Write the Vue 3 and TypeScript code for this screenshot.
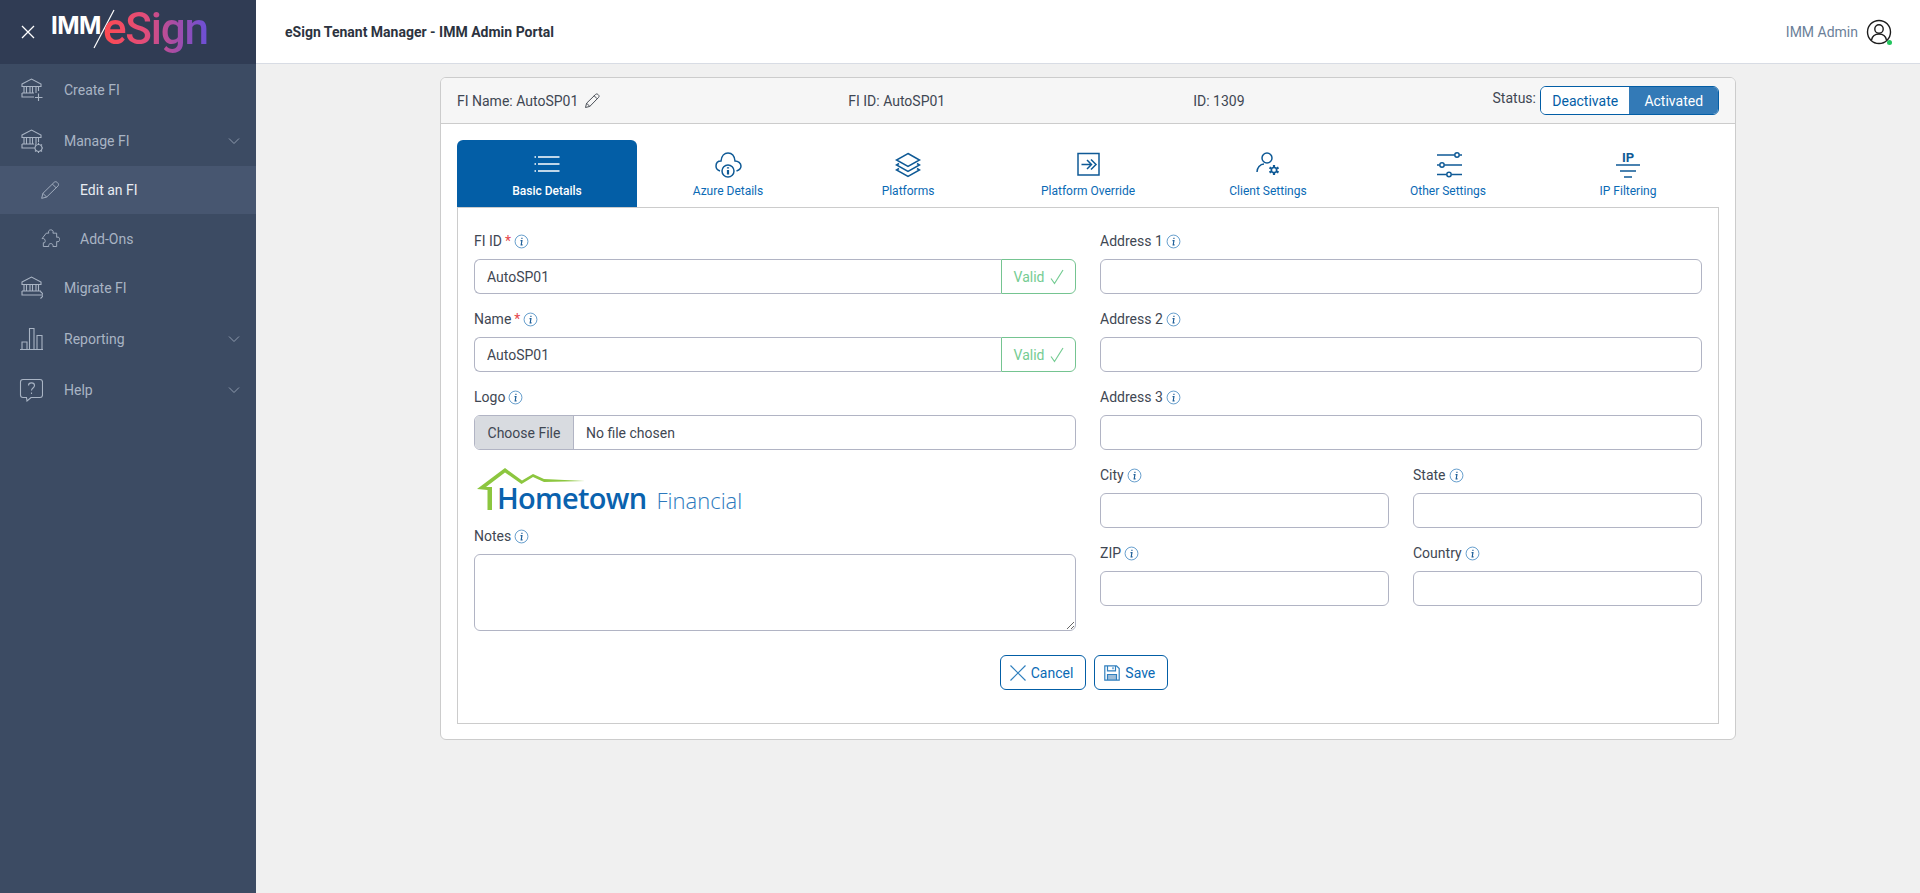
<template>
  <div class="app-shell">
    <aside class="sidebar">
      <div class="brand">
        <svg class="close-icon" viewBox="0 0 16 16" width="16" height="16">
          <path d="M2 2 L14 14 M14 2 L2 14" />
        </svg>
        <div class="logo">
          <span class="logo-imm">IMM</span>
          <svg class="logo-slash" viewBox="0 0 24 40" width="24" height="40"><path d="M22 1 L2 39" /></svg>
          <span class="logo-esign">eSign</span>
        </div>
      </div>
      <nav class="nav">
        <div
          v-for="item in navItems"
          :key="item.label"
          class="nav-item"
          :class="{ 'nav-sub': item.sub, 'nav-active': item.active }"
          :style="{ height: `${item.height}px` }"
        >
          <svg class="nav-icon" viewBox="0 0 24 24" :width="item.sub ? 20 : 24" :height="item.sub ? 20 : 24">
            <path :d="item.icon" />
          </svg>
          <span class="nav-label">{{ item.label }}</span>
          <svg v-if="item.chevron" class="nav-chevron" viewBox="0 0 12 8" width="12" height="8">
            <path d="M1 1.5 L6 6.5 L11 1.5" />
          </svg>
        </div>
      </nav>
    </aside>

    <div class="main">
      <header class="topbar">
        <div class="topbar-title">eSign Tenant Manager - IMM Admin Portal</div>
        <div class="user">
          <span>IMM Admin</span>
          <span class="avatar">
            <svg viewBox="0 0 26 26" width="26" height="26">
              <circle cx="13" cy="13" r="11.5" />
              <circle cx="13" cy="10" r="4.2" />
              <path d="M5.5 21 C6.5 16.5 9.5 15 13 15 C16.5 15 19.5 16.5 20.5 21" />
            </svg>
            <i class="avatar-dot"></i>
          </span>
        </div>
      </header>

      <section class="card">
        <div class="card-head">
          <div class="head-item">
            FI Name: AutoSP01
            <svg class="head-pencil" viewBox="0 0 16 16" width="16" height="16">
              <path d="M1.5 14.5 L2.6 10.2 L11.6 1.4 C12.3 .8 13.2 .8 13.9 1.4 L14.6 2.1 C15.2 2.8 15.2 3.7 14.6 4.4 L5.8 13.4 Z M10.2 2.8 L13.2 5.8 M2.6 10.2 L5.8 13.4" />
            </svg>
          </div>
          <div class="head-item">FI ID: AutoSP01</div>
          <div class="head-item">ID: 1309</div>
          <div class="status">
            <span>Status:</span>
            <div class="status-group">
              <button type="button" class="status-btn">Deactivate</button>
              <button type="button" class="status-btn status-on">Activated</button>
            </div>
          </div>
        </div>

        <div class="card-body">
          <div class="tabs">
            <div v-for="(tab, i) in tabs" :key="tab.label" class="tab" :class="{ 'tab-active': i === 0 }">
              <svg class="tab-icon" viewBox="0 0 28 28" width="28" height="28">
                <path :d="tab.icon" />
                <circle v-for="(c, j) in tab.circles" :key="j" :cx="c[0]" :cy="c[1]" :r="c[2]" />
                <path v-if="tab.extra" class="tab-icon-bold" :d="tab.extra" />
                <text v-if="tab.text" x="14" y="11" text-anchor="middle" class="tab-icon-text">{{ tab.text }}</text>
              </svg>
              <span>{{ tab.label }}</span>
            </div>
          </div>

          <div class="panel">
            <div class="form-grid">
              <div>
                <div class="field">
                  <label class="field-label">FI ID <em>*</em><svg class="info" viewBox="0 0 14 14" width="15" height="15"><circle cx="7" cy="7" r="6" /><path d="M7.4 3.6 V4.6 M6.1 6.2 H7.4 L6.7 10.2 H8" /></svg></label>
                  <div class="input-group">
                    <input class="input" type="text" value="AutoSP01" />
                    <span class="valid">Valid
                      <svg viewBox="0 0 16 16" width="16" height="16"><path d="M2 9.500 L5.500 14.500 L14 1" /></svg>
                    </span>
                  </div>
                </div>
                <div class="field">
                  <label class="field-label">Name <em>*</em><svg class="info" viewBox="0 0 14 14" width="15" height="15"><circle cx="7" cy="7" r="6" /><path d="M7.4 3.6 V4.6 M6.1 6.2 H7.4 L6.7 10.2 H8" /></svg></label>
                  <div class="input-group">
                    <input class="input" type="text" value="AutoSP01" />
                    <span class="valid">Valid
                      <svg viewBox="0 0 16 16" width="16" height="16"><path d="M2 9.500 L5.500 14.500 L14 1" /></svg>
                    </span>
                  </div>
                </div>
                <div class="field-logo">
                  <label class="field-label">Logo<svg class="info" viewBox="0 0 14 14" width="15" height="15"><circle cx="7" cy="7" r="6" /><path d="M7.4 3.6 V4.6 M6.1 6.2 H7.4 L6.7 10.2 H8" /></svg></label>
                  <input class="file-input" type="file" />
                </div>
                <div class="ht-logo">
                  <svg class="ht-roof" viewBox="0 0 116 50" width="116" height="50">
                    <path class="ht-green" d="M3 26 L31 5 L48 17.500 L59 11 L70 16 L111 18 L70 19 L59 14 L47.500 21 L31 9.500 L12 24 L18 24 L18 47 L13.500 47 L13.500 27 Z" />
                  </svg>
                  <span class="ht-name">Hometown</span>
                  <span class="ht-fin">Financial</span>
                </div>
                <div class="field-notes">
                  <label class="field-label">Notes<svg class="info" viewBox="0 0 14 14" width="15" height="15"><circle cx="7" cy="7" r="6" /><path d="M7.4 3.6 V4.6 M6.1 6.2 H7.4 L6.7 10.2 H8" /></svg></label>
                  <textarea class="textarea"></textarea>
                </div>
              </div>

              <div>
                <div v-for="f in ['Address 1', 'Address 2', 'Address 3']" :key="f" class="field">
                  <label class="field-label">{{ f }}<svg class="info" viewBox="0 0 14 14" width="15" height="15"><circle cx="7" cy="7" r="6" /><path d="M7.4 3.6 V4.6 M6.1 6.2 H7.4 L6.7 10.2 H8" /></svg></label>
                  <input class="input input-full" type="text" />
                </div>
                <div class="pair">
                  <div v-for="f in ['City', 'State', 'ZIP', 'Country']" :key="f" class="field">
                    <label class="field-label">{{ f }}<svg class="info" viewBox="0 0 14 14" width="15" height="15"><circle cx="7" cy="7" r="6" /><path d="M7.4 3.6 V4.6 M6.1 6.2 H7.4 L6.7 10.2 H8" /></svg></label>
                    <input class="input input-full" type="text" />
                  </div>
                </div>
              </div>
            </div>

            <div class="actions">
              <button type="button" class="action-btn">
                <svg viewBox="0 0 16 16" width="16" height="16"><path d="M.5 .5 L15.500 15.500 M15.500 .5 L.5 15.500" /></svg>
                Cancel
              </button>
              <button type="button" class="action-btn">
                <svg viewBox="0 0 16 16" width="16" height="16">
                  <path class="save-fill" d="M3.500 10 H12.500 V15 H3.500 Z" />
                  <path d="M.8 .8 H12.500 L15.200 3.500 V15.200 H.8 Z M3.500 .8 V5.800 H11.500 V.8 M3.500 15.200 V9.500 H12.500 V15.200 M9 2.300 V4.300" />
                </svg>
                Save
              </button>
            </div>
          </div>
        </div>
      </section>
    </div>
  </div>
</template>

<script setup lang="ts">
interface NavItem {
  label: string
  icon: string
  height: number
  sub?: boolean
  active?: boolean
  chevron?: boolean
}

interface Tab {
  label: string
  icon: string
  circles?: number[][]
  extra?: string
  text?: string
}

const bank = 'M3 6 L12.500 1 L22 6 V8.500 H3 Z M5 8.500 V15 M7.500 8.500 V15 M11 8.500 V15 M13.500 8.500 V15 M17 8.500 V15 M19.500 8.500 V13 M3 15 H15 M3 15 V19 H15 '

const navItems: NavItem[] = [
  { label: 'Create FI', height: 51, icon: `${bank} M19.500 15.500 V23 M16 19.500 H23.500` },
  {
    label: 'Manage FI',
    height: 51,
    chevron: true,
    icon: `${bank} M19.500 15.500 a3.500 3.500 0 1 0 .01 0 Z M19.500 13.800 V15.500 M19.500 22.500 V24 M14.500 19 H16 M23 19 H24.500 M16 15.500 L17 16.500 M22 21.500 L23 22.500 M16 22.500 L17 21.500 M22 16.500 L23 15.500`,
  },
  {
    label: 'Edit an FI',
    height: 48,
    sub: true,
    active: true,
    icon: 'M2 22 L3.500 16 L17 2.800 C18 1.800 19.500 1.800 20.500 2.800 L21.500 3.800 C22.500 4.800 22.500 6.300 21.500 7.300 L8 20.500 Z M15 5 L19.500 9.500 M3.500 16 L8 20.500',
  },
  {
    label: 'Add-Ons',
    height: 49,
    sub: true,
    icon: 'M7.500 5 H10.500 C9.500 2.500 11 1 13 1 C15 1 16.500 2.500 15.500 5 H20 V10 C22.500 9 23.500 10.500 23.500 12.500 C23.500 14.500 22.500 16 20 15 V21 H15.500 C16 19 15 17.500 13 17.500 C11 17.500 10 19 10.500 21 H4 V16.500 H5.500 C7 14.500 6 12 4.500 11.500 H2.500 Z',
  },
  {
    label: 'Migrate FI',
    height: 50,
    icon: 'M3 6 L12.500 1 L22 6 V8.500 H3 Z M5 8.500 V15 M7.500 8.500 V15 M11 8.500 V15 M13.500 8.500 V15 M17 8.500 V15 M19.500 8.500 V15 M3 15 H22 M3 15 V19 H25 M21.500 15.500 L25 19 L21.500 22.500',
  },
  {
    label: 'Reporting',
    height: 51,
    chevron: true,
    icon: 'M1 22.500 H24 M3 22.500 V15 H8 V22.500 M10.500 22.500 V1.500 H15 V22.500 M18 22.500 V8.500 H23 V22.500',
  },
  {
    label: 'Help',
    height: 51,
    chevron: true,
    icon: 'M4 1.500 H21 C22.500 1.500 23.500 2.500 23.500 4 V17 C23.500 18.500 22.500 19.500 21 19.500 H12 L8 23 L7.500 19.500 H4 C2.500 19.500 1.500 18.500 1.500 17 V4 C1.500 2.500 2.500 1.500 4 1.500 Z M9.500 7.500 C9.500 4 15.500 4 15.500 7.500 C15.500 10 12.500 10 12.500 12.500 M12.500 14.500 V16',
  },
]

const gearTeeth = 'M20 14 V16 M20 22 V24 M15.500 16.500 L17.300 17.500 M22.700 20.500 L24.500 21.500 M15.500 21.500 L17.300 20.500 M22.700 17.500 L24.500 16.500'

const tabs: Tab[] = [
  {
    label: 'Basic Details',
    icon: 'M1.500 6 H3 M1.500 13 H3 M1.500 20 H3 M5 6 H26.500 M5 13 H26.500 M5 20 H26.500',
  },
  {
    label: 'Azure Details',
    icon: 'M6 20 C3 19 2 17 2 15 C2 12 4 10 7 10 C7.500 5 10.500 2 14 2 C18 2 20.500 5 21 10 C24 10 27 12 27 15 C27 17 25.500 19 22.500 20',
    circles: [[14, 20, 6]],
    extra: 'M14 19 V23.500 M14 16.300 V17.600',
  },
  {
    label: 'Platforms',
    icon: 'M14 2.500 L25.500 9 L14 15.500 L2.500 9 Z M5 12.500 L2.500 14 L14 20.500 L25.500 14 L23 12.500 M5 17.500 L2.500 19 L14 25.500 L25.500 19 L23 17.500',
  },
  {
    label: 'Platform Override',
    icon: 'M4 2.500 H25 V24 H4 Z M7.500 13.500 H17 M13 9 L17.500 13.500 L13 18 M17 8.500 L22 13.500 L17 18.500',
  },
  {
    label: 'Client Settings',
    icon: 'M3 21 C3 17 6 13 10 13',
    circles: [[13, 7, 5], [20, 19, 2.6]],
    extra: gearTeeth,
  },
  {
    label: 'Other Settings',
    icon: 'M3 4 H20.500 M25.500 4 H28 M3 14 H5.500 M10.500 14 H28 M3 23.500 H12.500 M17.500 23.500 H28',
    circles: [[23, 4, 2.2], [8, 14, 2.2], [15, 23.5, 2.2]],
  },
  {
    label: 'IP Filtering',
    icon: 'M2 14 H26 M6 20 H22 M10 26 H18',
    text: 'IP',
  },
]
</script>

<style>
html,
body {
  margin: 0;
  background: #f0f0f0;
}
</style>

<style scoped>
.app-shell {
  display: flex;
  min-height: 893px;
  font-family: Roboto, "Liberation Sans", sans-serif;
  font-size: 14px;
  color: #3f4753;
}

.sidebar {
  width: 256px;
  flex: none;
  background: #3c4b63;
}

.brand {
  height: 64px;
  display: flex;
  align-items: center;
  padding-left: 20px;
  background: #303c54;
}

.close-icon path {
  fill: none;
  stroke: #fff;
  stroke-width: 1.3;
}

.logo {
  position: relative;
  display: flex;
  align-items: flex-start;
  margin-left: 15px;
  width: 160px;
  height: 64px;
}

.logo-imm {
  font-family: Inter, Roboto, sans-serif;
  font-weight: 700;
  font-size: 24px;
  line-height: 24px;
  color: #fff;
  margin-top: 14px;
  letter-spacing: -0.5px;
}

.logo-slash {
  position: absolute;
  left: 41px;
  top: 9px;
}

.logo-slash path {
  stroke: #fff;
  stroke-width: 1.2;
  fill: none;
}

.logo-esign {
  position: absolute;
  left: 52px;
  top: 3px;
  font-family: Roboto, sans-serif;
  font-weight: 500;
  font-size: 44px;
  line-height: 52px;
  letter-spacing: -1.2px;
  background: linear-gradient(90deg, #ff4a50 0%, #e14d7a 40%, #a34da8 70%, #6a50d8 100%);
  -webkit-background-clip: text;
  background-clip: text;
  color: transparent;
}

.nav-item {
  display: flex;
  align-items: center;
  padding-left: 19px;
  padding-right: 16px;
  color: #a9b4c4;
}

.nav-sub {
  padding-left: 40px;
}

.nav-active {
  background: #475670;
  color: #e8ecf2;
}

.nav-icon {
  flex: none;
}

.nav-icon path {
  fill: none;
  stroke: #a9b4c4;
  stroke-width: 1.1;
}

.nav-label {
  margin-left: 21px;
}

.nav-sub .nav-label {
  margin-left: 20px;
}

.nav-chevron {
  margin-left: auto;
}

.nav-chevron path {
  fill: none;
  stroke: #8f9bae;
  stroke-width: 1;
}

.main {
  flex: 1;
  min-width: 0;
}

.topbar {
  height: 64px;
  box-sizing: border-box;
  display: flex;
  align-items: center;
  justify-content: space-between;
  background: #fff;
  border-bottom: 1px solid #d8dce4;
  padding: 0 28px 0 29px;
}

.topbar-title {
  font-size: 14px;
  font-weight: 700;
  color: #2c3340;
}

.user {
  display: flex;
  align-items: center;
  gap: 8px;
  color: #6b7f99;
}

.avatar {
  position: relative;
  display: block;
  width: 26px;
  height: 26px;
}

.avatar svg {
  display: block;
  fill: none;
  stroke: #1c1c1c;
  stroke-width: 1.4;
}

.avatar-dot {
  position: absolute;
  right: 0;
  bottom: 0;
  width: 5px;
  height: 5px;
  border-radius: 50%;
  background: #22c55e;
}

.card {
  box-sizing: border-box;
  width: 1296px;
  margin: 13px 0 0 184px;
  background: #fff;
  border: 1px solid #ccc;
  border-radius: 6px;
  overflow: hidden;
}

.card-head {
  height: 46px;
  box-sizing: border-box;
  display: flex;
  align-items: center;
  justify-content: space-between;
  padding: 0 16px;
  background: #f6f6f6;
  border-bottom: 1px solid #ccc;
}

.head-item {
  display: flex;
  align-items: center;
  gap: 6px;
}

.head-pencil path {
  fill: none;
  stroke: #4a4f57;
  stroke-width: 1;
}

.status {
  display: flex;
  align-items: flex-start;
  gap: 4px;
  height: 29px;
  line-height: 24px;
}

.status-group {
  display: flex;
  height: 29px;
  box-sizing: border-box;
  border: 1px solid #035ea6;
  border-radius: 6px;
  overflow: hidden;
}

.status-btn {
  font: inherit;
  line-height: 1;
  border: 0;
  padding: 0;
  width: 88.5px;
  background: #fff;
  color: #035ea6;
}

.status-on {
  background: #337ab7;
  color: #fff;
}

.card-body {
  padding: 16px 16px 15px;
}

.tabs {
  display: flex;
}

.tab {
  width: 180px;
  height: 67px;
  box-sizing: border-box;
  display: flex;
  flex-direction: column;
  align-items: center;
  padding-top: 11px;
  font-size: 12px;
  color: #0a6ab5;
}

.tab:not(.tab-active) {
  padding-left: 2px;
}

.tab-active {
  background: #035ea6;
  color: #fff;
  border-radius: 6px 6px 0 0;
  font-weight: 500;
}

.tab-icon {
  display: block;
  margin-bottom: 5px;
  fill: none;
  stroke: #0f5a96;
  stroke-width: 1.5;
}

.tab-active .tab-icon {
  stroke: #fff;
}

.tab-icon-bold {
  stroke-width: 2.2;
}

.tab-icon-text {
  font-size: 13px;
  font-weight: 700;
  fill: #0f5a96;
  stroke: none;
}

.panel {
  border: 1px solid #ccc;
  padding: 24px 16px 33px;
}

.form-grid {
  display: grid;
  grid-template-columns: 1fr 1fr;
  column-gap: 24px;
}

.field {
  margin-bottom: 16px;
}

.field-label {
  display: flex;
  align-items: center;
  height: 18px;
  margin-bottom: 9px;
  font-size: 14px;
  color: #3f4753;
}

.field-label em {
  font-style: normal;
  color: #e5484d;
  margin-left: 3px;
}

.info {
  margin-left: 3px;
  fill: none;
  stroke: #4d8fc4;
  stroke-width: 0.8;
}

.info path {
  stroke: #1f5f99;
  stroke-width: 1.1;
}

.input-group {
  display: flex;
  height: 35px;
}

.input {
  box-sizing: border-box;
  height: 35px;
  font: inherit;
  color: #3f4753;
  border: 1px solid #b1b4c4;
  border-radius: 6px;
  padding: 0 12px;
  background: #fff;
  outline: none;
}

.input-group .input {
  flex: 1;
  min-width: 0;
  border-right: 0;
  border-radius: 6px 0 0 6px;
}

.input-full {
  display: block;
  width: 100%;
}

.valid {
  width: 75px;
  box-sizing: border-box;
  flex: none;
  display: flex;
  align-items: center;
  justify-content: center;
  gap: 5px;
  padding-left: 2px;
  color: #75cc93;
  border: 1px solid #75c491;
  border-radius: 0 6px 6px 0;
}

.valid svg {
  fill: none;
  stroke: #75cc93;
  stroke-width: 1.2;
}

.field-logo {
  margin-bottom: 13px;
}

.file-input {
  display: block;
  box-sizing: border-box;
  width: 100%;
  height: 35px;
  font: inherit;
  color: #3f4753;
  border: 1px solid #b1b4c4;
  border-radius: 6px;
  overflow: hidden;
  background: #fff;
}

.file-input::file-selector-button {
  font: inherit;
  color: #3f4753;
  height: 35px;
  width: 99px;
  margin: -1px 12px 0 0;
  border: 0;
  border-right: 1px solid #b1b4c4;
  background: #d8dbe0;
}

.ht-logo {
  position: relative;
  display: flex;
  align-items: baseline;
  height: 51px;
  margin-bottom: 13px;
  padding: 15px 0 0 23px;
  box-sizing: border-box;
  font-family: "Open Sans", sans-serif;
  color: #0a62ae;
}

.ht-roof {
  position: absolute;
  left: 0;
  top: 0;
}

.ht-green {
  fill: #8cc63f;
  stroke: none;
}

.ht-name {
  font-size: 29px;
  line-height: 40px;
  font-weight: 600;
  letter-spacing: -0.7px;
}

.ht-fin {
  font-size: 22px;
  font-weight: 300;
  margin-left: 10px;
  color: #2b79bd;
}

.textarea {
  display: block;
  box-sizing: border-box;
  width: 100%;
  height: 77px;
  font: inherit;
  border: 1px solid #b1b4c4;
  border-radius: 6px;
  outline: none;
}

.pair {
  display: grid;
  grid-template-columns: 1fr 1fr;
  column-gap: 24px;
}

.actions {
  display: flex;
  justify-content: center;
  margin-top: 24px;
}

.action-btn {
  display: flex;
  align-items: center;
  gap: 5px;
  height: 35px;
  margin-right: 8px;
  padding: 0 12px 0 9px;
  font: inherit;
  color: #0a6ab5;
  background: #fff;
  border: 1px solid #035ea6;
  border-radius: 6px;
}

.action-btn svg {
  fill: none;
  stroke: #2f7fbe;
  stroke-width: 1.2;
}

.action-btn .save-fill {
  fill: #9dbdd8;
  stroke: none;
}
</style>
